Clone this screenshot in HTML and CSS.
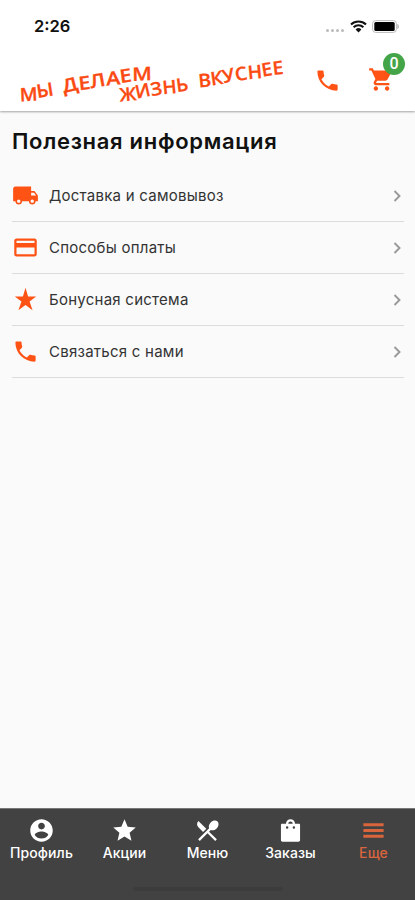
FILE: index.html
```
<!DOCTYPE html>
<html lang="ru">
<head>
<meta charset="utf-8">
<meta name="viewport" content="width=device-width, initial-scale=1.0">
<title>Полезная информация</title>
<link rel="stylesheet" href="styles.css">
</head>
<body>
<header class="header">
  <div class="status-bar">
    <span class="time">2:26</span>
    <div class="status-icons">
      <span class="signal"><i></i><i></i><i></i><i></i></span>
      <svg class="wifi" viewBox="0 0 17 13">
        <path d="M1 4.5a10.8 10.8 0 0 1 15 0M3.6 7.3a7 7 0 0 1 9.8 0" fill="none" stroke="#111" stroke-width="2.1"/>
        <path d="M5.6 9.5a4.2 4.2 0 0 1 5.8 0L8.5 12.5z" fill="#111"/>
      </svg>
      <svg class="battery" viewBox="0 0 28 13">
        <rect x=".6" y=".6" width="23.8" height="11.8" rx="3" fill="none" stroke="#bbb"/>
        <rect x="2.3" y="2" width="20.4" height="9" rx="1.5" fill="#000"/>
        <path d="M25.5 4v5c1.6-.6 1.6-4.400 0-5z" fill="#999"/>
      </svg>
    </div>
  </div>
  <div class="top-bar">
    <svg class="logo" viewBox="0 0 290 58">
      <text transform="translate(20 49.500) rotate(-11)" textLength="35" lengthAdjust="spacingAndGlyphs" rotate="8 2">МЫ</text>
      <text transform="translate(64 41) rotate(-10)" textLength="89" lengthAdjust="spacingAndGlyphs" rotate="-4 3 0 6 2 8">ДЕЛАЕМ</text>
      <text transform="translate(120 49.500) rotate(-9.500)" textLength="70" lengthAdjust="spacingAndGlyphs" rotate="5 -3 0 4 2">ЖИЗНЬ</text>
      <text transform="translate(199 35.500) rotate(-9.500)" textLength="86" lengthAdjust="spacingAndGlyphs" rotate="4 1 -3 0 4 0 3">ВКУСНЕЕ</text>
    </svg>
    <a class="call" href="#"><svg class="icon" viewBox="0 0 24 24"><path d="M6.620 10.790c1.440 2.830 3.760 5.140 6.590 6.590l2.200-2.200c.27-.27.67-.36 1.020-.24 1.120.37 2.330.57 3.570.57.55 0 1 .45 1 1V20c0 .55-.45 1-1 1-9.390 0-17-7.610-17-17 0-.55.45-1 1-1h3.500c.55 0 1 .45 1 1 0 1.250.2 2.450.57 3.570.11.35.03.74-.25 1.020l-2.200 2.200z"/></svg></a>
    <a class="cart" href="#">
      <svg class="icon" viewBox="0 0 24 24"><path d="M7 18c-1.100 0-1.990.9-1.990 2S5.900 22 7 22s2-.9 2-2-.9-2-2-2zM1 2v2h2l3.600 7.590-1.350 2.450c-.16.28-.25.61-.25.96 0 1.100.9 2 2 2h12v-2H7.420c-.14 0-.25-.11-.25-.25l.03-.12.9-1.630h7.450c.75 0 1.410-.41 1.750-1.030l3.580-6.490c.08-.14.12-.31.12-.48 0-.55-.45-1-1-1H5.210l-.94-2H1zm16 16c-1.100 0-1.990.9-1.990 2s.89 2 1.990 2 2-.9 2-2-.9-2-2-2z"/></svg>
      <span class="badge">0</span>
    </a>
  </div>
</header>

<main class="content">
  <h1>Полезная информация</h1>
  <ul class="menu-list">
    <li>
      <svg class="icon" viewBox="0 0 24 24"><path d="M20 8h-3V4H3c-1.100 0-2 .9-2 2v11h2c0 1.660 1.340 3 3 3s3-1.340 3-3h6c0 1.660 1.340 3 3 3s3-1.340 3-3h2v-5l-3-4zM6 18.500c-.83 0-1.500-.67-1.500-1.500s.67-1.500 1.500-1.500 1.500.67 1.500 1.500-.67 1.500-1.500 1.500zm13.500-9l1.960 2.500H17V9.500h2.500zm-1.500 9c-.83 0-1.500-.67-1.500-1.500s.67-1.500 1.500-1.500 1.500.67 1.500 1.500-.67 1.500-1.500 1.500z"/></svg>
      <span class="name">Доставка и самовывоз</span>
      <svg class="arrow" viewBox="0 0 8 12"><path d="M1.500 1l5 5-5 5"/></svg>
    </li>
    <li>
      <svg class="icon" viewBox="0 0 24 24"><path d="M20 4H4c-1.110 0-1.990.89-1.990 2L2 18c0 1.110.89 2 2 2h16c1.110 0 2-.89 2-2V6c0-1.110-.89-2-2-2zm0 14H4v-6h16v6zm0-10H4V6h16v2z"/></svg>
      <span class="name">Способы оплаты</span>
      <svg class="arrow" viewBox="0 0 8 12"><path d="M1.500 1l5 5-5 5"/></svg>
    </li>
    <li>
      <svg class="icon" viewBox="0 0 24 24"><path d="M12 1.500l2.300 7.800H21.500l-5.900 4.500 2.700 7.700L12 16.800l-6.300 4.700 2.700-7.700-5.900-4.500h7.200z"/></svg>
      <span class="name">Бонусная система</span>
      <svg class="arrow" viewBox="0 0 8 12"><path d="M1.500 1l5 5-5 5"/></svg>
    </li>
    <li>
      <svg class="icon" viewBox="0 0 24 24"><path d="M6.620 10.790c1.440 2.830 3.760 5.140 6.590 6.590l2.200-2.200c.27-.27.67-.36 1.020-.24 1.120.37 2.330.57 3.570.57.55 0 1 .45 1 1V20c0 .55-.45 1-1 1-9.390 0-17-7.610-17-17 0-.55.45-1 1-1h3.500c.55 0 1 .45 1 1 0 1.250.2 2.450.57 3.570.11.35.03.74-.25 1.020l-2.200 2.200z"/></svg>
      <span class="name">Связаться с нами</span>
      <svg class="arrow" viewBox="0 0 8 12"><path d="M1.500 1l5 5-5 5"/></svg>
    </li>
  </ul>
</main>

<footer class="footer">
  <nav class="tabs">
    <a href="#">
      <svg class="icon" viewBox="0 0 24 24"><path d="M12 2C6.480 2 2 6.480 2 12s4.480 10 10 10 10-4.480 10-10S17.520 2 12 2zm0 3c1.660 0 3 1.340 3 3s-1.340 3-3 3-3-1.340-3-3 1.340-3 3-3zm0 14.200c-2.500 0-4.710-1.280-6-3.220.03-1.990 4-3.080 6-3.080 1.990 0 5.970 1.090 6 3.080-1.290 1.940-3.500 3.220-6 3.220z"/></svg>
      <span>Профиль</span>
    </a>
    <a href="#">
      <svg class="icon" viewBox="0 0 24 24"><path d="M12 17.270L18.180 21l-1.640-7.030L22 9.240l-7.190-.61L12 2 9.190 8.630 2 9.240l5.460 4.730L5.820 21z"/></svg>
      <span>Акции</span>
    </a>
    <a href="#">
      <svg class="icon" viewBox="0 0 24 24"><path d="M8.100 13.340l2.830-2.830L3.910 3.500c-1.560 1.560-1.560 4.090 0 5.660l4.190 4.180zm6.780-1.810c1.530.71 3.680.21 5.270-1.380 1.910-1.910 2.280-4.650.81-6.120-1.460-1.460-4.200-1.100-6.120.81-1.590 1.590-2.090 3.740-1.380 5.270L3.700 19.870l1.410 1.410L12 14.410l6.880 6.880 1.410-1.410L13.410 13l1.470-1.470z"/></svg>
      <span>Меню</span>
    </a>
    <a href="#">
      <svg class="icon" viewBox="0 0 24 24"><path fill-rule="evenodd" d="M19.500 6H16a4 4 0 0 0-8 0H4.500c-.6 0-1 .4-1 1v13.500c0 .9.700 1.500 1.500 1.500h14c.8 0 1.500-.6 1.500-1.500V7c0-.6-.4-1-1-1zM12 4a2 2 0 0 1 2 2h-4a2 2 0 0 1 2-2zM9 8.200a1.100 1.100 0 1 1 0 2.200 1.100 1.100 0 0 1 0-2.200zm6 0a1.100 1.100 0 1 1 0 2.200 1.100 1.100 0 0 1 0-2.200z"/></svg>
      <span>Заказы</span>
    </a>
    <a href="#" class="active">
      <svg class="icon" viewBox="0 0 24 24"><path d="M3 18.500h18v-2.700H3v2.700zm0-5.150h18v-2.700H3v2.700zM3 5.500v2.700h18V5.500H3z"/></svg>
      <span>Еще</span>
    </a>
  </nav>
  <div class="home-line"></div>
</footer>
</body>
</html>
```
FILE: styles.css
```
* {
  box-sizing: border-box;
}

body {
  margin: 0;
  height: 900px;
  display: flex;
  flex-direction: column;
  font-family: Inter, "Liberation Sans", sans-serif;
  background-color: #fafafa;
  color: #111;
}

.header {
  height: 111px;
  background-color: #fff;
  box-shadow: 0 1px 2px rgba(0, 0, 0, 0.35);
}

.status-bar {
  height: 52px;
  padding: 0 15px 0 34px;
  display: flex;
  align-items: center;
  justify-content: space-between;
}

.time {
  font-size: 16.500px;
  font-weight: 600;
}

.status-icons {
  display: flex;
  align-items: center;
}

.signal {
  display: flex;
  gap: 2px;
  margin: 8px 6px 0 0;
}

.signal i {
  width: 3px;
  height: 3px;
  border-radius: 50%;
  background-color: #bbb;
}

.wifi {
  width: 17px;
  height: 13px;
  margin-right: 5px;
}

.battery {
  width: 28px;
  height: 13px;
}

.top-bar {
  display: flex;
  height: 58px;
}

.logo {
  width: 290px;
  height: 58px;
  flex: none;
  overflow: visible;
}

.logo text {
  font-family: "Open Sans", sans-serif;
  font-size: 18.500px;
  font-weight: 600;
  fill: #fb4a12;
  stroke: #fb4a12;
  stroke-width: 0.3;
}

.icon {
  width: 27px;
  height: 27px;
  display: block;
  fill: #ff5316;
}

.call {
  margin: 15px 0 0 24px;
}

.cart {
  position: relative;
  margin: 14px 0 0 27px;
}

.badge {
  position: absolute;
  top: -13px;
  right: -10px;
  width: 22px;
  height: 22px;
  border-radius: 50%;
  background-color: #43a548;
  color: #fff;
  font-family: Roboto, sans-serif;
  font-size: 16px;
  font-weight: 500;
  line-height: 22px;
  text-align: center;
}

.content {
  flex: 1;
  padding: 16px 11px 0 12px;
}

h1 {
  margin: 0;
  font-size: 22px;
  font-weight: 600;
  line-height: 28px;
  letter-spacing: 0.7px;
  white-space: nowrap;
}

.menu-list {
  list-style: none;
  margin: 15px 0 0;
  padding: 0;
}

.menu-list li {
  height: 52.100px;
  display: flex;
  align-items: center;
  border-bottom: 1px solid #dcdcdc;
}

.name {
  flex: 1;
  margin-left: 10px;
  font-size: 15px;
  letter-spacing: 0.25px;
  color: #333;
}

.arrow {
  width: 8px;
  height: 12px;
  margin-right: 3px;
  fill: none;
  stroke: #999;
  stroke-width: 1.900;
}

.footer {
  height: 92px;
  background-color: #424242;
  border-top: 1px solid #777;
}

.tabs {
  display: grid;
  grid-template-columns: repeat(5, 1fr);
  height: 78px;
  padding-top: 8px;
}

.tabs a {
  display: flex;
  flex-direction: column;
  align-items: center;
  color: #fff;
  font-size: 14px;
  font-weight: 500;
  line-height: 17px;
  letter-spacing: 0.1px;
  text-decoration: none;
}

.tabs .icon {
  fill: #fff;
}

.tabs .active {
  color: #d9653d;
}

.tabs .active .icon {
  fill: #d9653d;
}

.home-line {
  width: 150px;
  height: 4px;
  margin: 0 auto;
  border-radius: 2px;
  background-color: #3c3c3c;
}
```
